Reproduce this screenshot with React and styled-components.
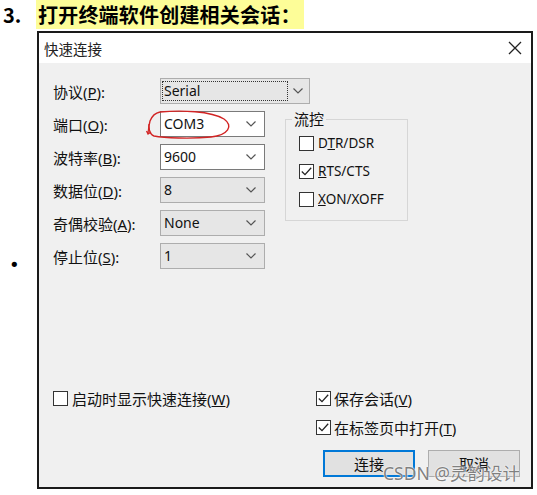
import React from "react";
import styled, { createGlobalStyle } from "styled-components";

const Global = createGlobalStyle`
  html, body { margin: 0; padding: 0; background: #ffffff; }
  body { font-family: "Noto Sans", "Noto Sans CJK SC", sans-serif; color: #000; }
  * { box-sizing: border-box; }
`;

const Page = styled.div`
  width: 537px;
  height: 495px;
  overflow: hidden;
  position: relative;
`;

const HeadingRow = styled.div`
  display: flex;
  align-items: baseline;
  height: 31px;
  font-family: "Noto Sans CJK SC", sans-serif;
  font-weight: 700;
  font-size: 20px;
  line-height: 29px;
`;

const Number = styled.span`
  width: 36px;
  padding-left: 3px;
`;

const Highlight = styled.span`
  background: #fdfd98;
  padding: 0 3px 0 2px;
  letter-spacing: 0.2px;
`;

const ContentRow = styled.div`
  display: flex;
  align-items: center;
`;

const BulletCol = styled.div`
  width: 37px;
  padding-left: 9px;
  margin-top: 8px;
  font-size: 18px;
  font-family: "DejaVu Sans", sans-serif;
`;

const Dialog = styled.div`
  position: relative;
  width: 496px;
  height: 458px;
  border: 2px solid #1a1a1a;
  display: flex;
  flex-direction: column;
`;

const TitleBar = styled.div`
  height: 30px;
  background: #ffffff;
  display: flex;
  align-items: center;
  justify-content: space-between;
  padding: 0 9px 0 5px;
  font-family: "Noto Sans CJK SC", sans-serif;
  font-size: 14.5px;
  color: #222;
`;

const Body = styled.div`
  flex: 1;
  background: #f0f0f0;
  display: flex;
  flex-direction: column;
  padding: 15px 11px 10px 14px;
`;

const Row = styled.div`
  display: grid;
  grid-template-columns: 107px auto;
  align-items: center;
  height: 26px;
`;

const Label = styled.span`
  font-size: 15px;
  color: #111;
  white-space: nowrap;
`;

const Lower = styled.div`
  display: flex;
  margin-top: 7px;
`;

const Rows = styled.div`
  display: flex;
  flex-direction: column;
  gap: 7px;
`;

const ComboBox = styled.div`
  position: relative;
  width: ${(p) => p.$w || 105}px;
  height: 26px;
  display: flex;
  align-items: center;
  justify-content: space-between;
  padding: 0 ${(p) => p.$pr || 8}px 0 2px;
  background: ${(p) => (p.$editable ? "#ffffff" : "#e6e6e6")};
  border: 1px solid ${(p) => (p.$editable ? "#7a7a7a" : "#adadad")};
  font-size: 14px;
  color: #111;
`;

const ComboText = styled.span`
  padding-left: 1px;
  line-height: 18px;
  flex: ${(p) => (p.$focused ? "0 0 124px" : "1")};
  outline: ${(p) => (p.$focused ? "1px dotted #333" : "none")};
  outline-offset: 0px;
`;

const Chevron = () => (
  <svg width="10" height="6" viewBox="0 0 10 6">
    <polyline points="0.5,0.5 5,5 9.5,0.5" fill="none" stroke="#555" strokeWidth="1.2" />
  </svg>
);

const RedMark = styled.svg`
  position: absolute;
  left: -15px;
  top: -3px;
  overflow: visible;
  pointer-events: none;
`;

const GroupBox = styled.fieldset`
  margin: -2px 0 0 20px;
  padding: 0;
  width: 123px;
  height: 112px;
  border: 1px solid #d6d6d6;
`;

const Legend = styled.legend`
  margin-left: 6px;
  padding: 0 2px;
  font-size: 15px;
  line-height: 20px;
  font-family: "Noto Sans CJK SC", sans-serif;
  color: #111;
`;

const GroupContent = styled.div`
  display: flex;
  flex-direction: column;
  padding-left: 13px;
`;

const CheckItem = styled.label`
  display: flex;
  align-items: center;
  gap: ${(p) => p.$gap || 4}px;
  height: ${(p) => p.$h || 28}px;
  font-size: ${(p) => p.$fs || 15}px;
  color: #111;
  white-space: nowrap;
`;

const Box = styled.span`
  width: 15px;
  height: 15px;
  border: 1.5px solid #333;
  background: #fff;
  display: flex;
  align-items: center;
  justify-content: center;
  flex: none;
`;

const Check = ({ checked }) => (
  <Box>
    {checked && (
      <svg width="11" height="9" viewBox="0 0 11 9">
        <polyline points="0.8,4.5 4,7.6 10.2,0.8" fill="none" stroke="#222" strokeWidth="1.3" />
      </svg>
    )}
  </Box>
);

const Bottom = styled.div`
  margin-top: auto;
  display: flex;
  justify-content: space-between;
  align-items: flex-start;
`;

const RightCol = styled.div`
  width: 204px;
  display: flex;
  flex-direction: column;
`;

const Buttons = styled.div`
  display: flex;
  justify-content: flex-end;
  gap: 13px;
  margin-top: 8px;
`;

const Button = styled.button`
  width: 92px;
  height: 27px;
  background: #e1e1e1;
  border: ${(p) => (p.$primary ? "2px solid #0078d7" : "1px solid #adadad")};
  font-family: "Noto Sans CJK SC", sans-serif;
  font-size: 15px;
  color: #111;
  padding: 0;
`;

const Watermark = styled.div`
  position: absolute;
  right: 11px;
  bottom: 4px;
  font-family: "Noto Sans", "Noto Sans CJK SC", sans-serif;
  font-size: 17.5px;
  line-height: 20px;
  color: rgba(105, 105, 105, 0.85);
  text-shadow: 0 0 2px #fff, 0 0 1px #fff;
  pointer-events: none;
`;

const CloseIcon = () => (
  <svg width="14" height="14" viewBox="0 0 14 14">
    <path d="M1 1 L13 13 M13 1 L1 13" stroke="#222" strokeWidth="1.3" fill="none" />
  </svg>
);

export default function App() {
  return (
    <Page>
      <Global />
      <HeadingRow>
        <Number>3.</Number>
        <Highlight>打开终端软件创建相关会话：</Highlight>
      </HeadingRow>
      <ContentRow>
        <BulletCol>•</BulletCol>
        <Dialog>
          <TitleBar>
            <span>快速连接</span>
            <CloseIcon />
          </TitleBar>
          <Body>
            <Row>
              <Label>协议(<u>P</u>):</Label>
              <ComboBox $w={150} $pr={6}>
                <ComboText $focused>Serial</ComboText>
                <Chevron />
              </ComboBox>
            </Row>
            <Lower>
              <Rows>
                <Row>
                  <Label>端口(<u>O</u>):</Label>
                  <ComboBox $editable>
                    <ComboText>COM3</ComboText>
                    <Chevron />
                    <RedMark width="90" height="32" viewBox="0 0 90 32">
                      <path
                        d="M 14 3 C 35 1, 65 2, 78 10 C 88 17, 82 26, 65 28 C 45 30, 18 29, 8 27 C 3 25, 2 18, 4 12 C 6 7, 9 4, 14 3"
                        fill="none"
                        stroke="#d22424"
                        strokeWidth="1.4"
                      />
                      <path d="M 3 15 L 2 25 M 0.5 22 L 2 25 L 5 23" fill="none" stroke="#d22424" strokeWidth="1.2" />
                    </RedMark>
                  </ComboBox>
                </Row>
                <Row>
                  <Label>波特率(<u>B</u>):</Label>
                  <ComboBox $editable>
                    <ComboText>9600</ComboText>
                    <Chevron />
                  </ComboBox>
                </Row>
                <Row>
                  <Label>数据位(<u>D</u>):</Label>
                  <ComboBox>
                    <ComboText>8</ComboText>
                    <Chevron />
                  </ComboBox>
                </Row>
                <Row>
                  <Label>奇偶校验(<u>A</u>):</Label>
                  <ComboBox>
                    <ComboText>None</ComboText>
                    <Chevron />
                  </ComboBox>
                </Row>
                <Row>
                  <Label>停止位(<u>S</u>):</Label>
                  <ComboBox>
                    <ComboText>1</ComboText>
                    <Chevron />
                  </ComboBox>
                </Row>
              </Rows>
              <GroupBox>
                <Legend>流控</Legend>
                <GroupContent>
                  <CheckItem $fs={13.5}>
                    <Check />
                    <span>D<u>T</u>R/DSR</span>
                  </CheckItem>
                  <CheckItem $fs={13.5}>
                    <Check checked />
                    <span><u>R</u>TS/CTS</span>
                  </CheckItem>
                  <CheckItem $fs={13.5}>
                    <Check />
                    <span><u>X</u>ON/XOFF</span>
                  </CheckItem>
                </GroupContent>
              </GroupBox>
            </Lower>
            <Bottom>
              <CheckItem $h={29}>
                <Check />
                <span>启动时显示快速连接(<u>W</u>)</span>
              </CheckItem>
              <RightCol>
                <CheckItem $h={29} $gap={3}>
                  <Check checked />
                  <span>保存会话(<u>V</u>)</span>
                </CheckItem>
                <CheckItem $h={29} $gap={3}>
                  <Check checked />
                  <span>在标签页中打开(<u>T</u>)</span>
                </CheckItem>
                <Buttons>
                  <Button $primary>连接</Button>
                  <Button>取消</Button>
                </Buttons>
              </RightCol>
            </Bottom>
          </Body>
          <Watermark>CSDN @灵韵设计</Watermark>
        </Dialog>
      </ContentRow>
    </Page>
  );
}
